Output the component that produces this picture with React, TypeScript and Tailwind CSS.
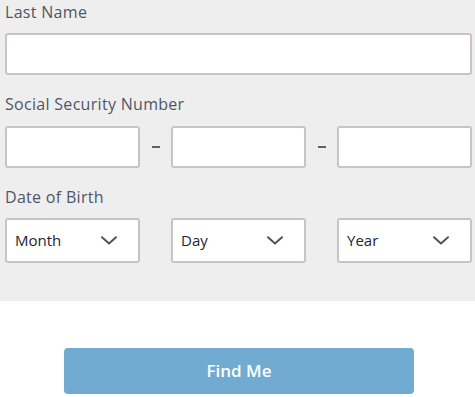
const font = { fontFamily: '"Open Sans", "Lato", sans-serif' }

function Label({ children }: { children: string }) {
  return <div className="h-[25px] text-[16px] leading-[25px] tracking-[0.3px] text-[#4f5668]">{children}</div>
}

function Box() {
  return <div className="h-[42px] w-[135px] rounded-[3px] border-2 border-[#c9c4c4] bg-white" />
}

function Dash() {
  return (
    <div className="flex w-[31px] items-center justify-center">
      <div className="h-[2px] w-[8px] bg-[#5a6172]" />
    </div>
  )
}

function Chevron() {
  return (
    <svg width="16" height="9" viewBox="0 0 16 9" fill="none" className="text-[#555]">
      <path d="M1 1.2 L8 7.6 L15 1.2" stroke="currentColor" strokeWidth="2" strokeLinecap="round" strokeLinejoin="round" />
    </svg>
  )
}

function Select({ label }: { label: string }) {
  return (
    <div className="flex h-[45px] w-[135px] items-center justify-between rounded-[3px] border-2 border-[#c9c4c4] bg-white pl-[8px] pr-[21px]">
      <span className="text-[15px] text-[#1e2535]">{label}</span>
      <Chevron />
    </div>
  )
}

export default function App() {
  return (
    <div className="min-h-[397px] w-[475px] bg-white" style={font}>
      <div className="h-[301px] bg-[#eeeeee] pl-[5px] pr-[3px]">
        <Label>Last Name</Label>
        <div className="mt-[8px] h-[42px] rounded-[3px] border-2 border-[#c9c4c4] bg-white" />

        <div className="mt-[17px]">
          <Label>Social Security Number</Label>
        </div>
        <div className="mt-[9px] flex">
          <Box />
          <Dash />
          <Box />
          <Dash />
          <Box />
        </div>

        <div className="mt-[17px]">
          <Label>Date of Birth</Label>
        </div>
        <div className="mt-[8px] flex gap-[31px]">
          <Select label="Month" />
          <Select label="Day" />
          <Select label="Year" />
        </div>
      </div>

      <button className="ml-[64px] mt-[47px] flex h-[46px] w-[350px] items-center justify-center rounded-[4px] bg-[#72abd1] text-[17px] font-semibold text-white">
        Find Me
      </button>
    </div>
  )
}
